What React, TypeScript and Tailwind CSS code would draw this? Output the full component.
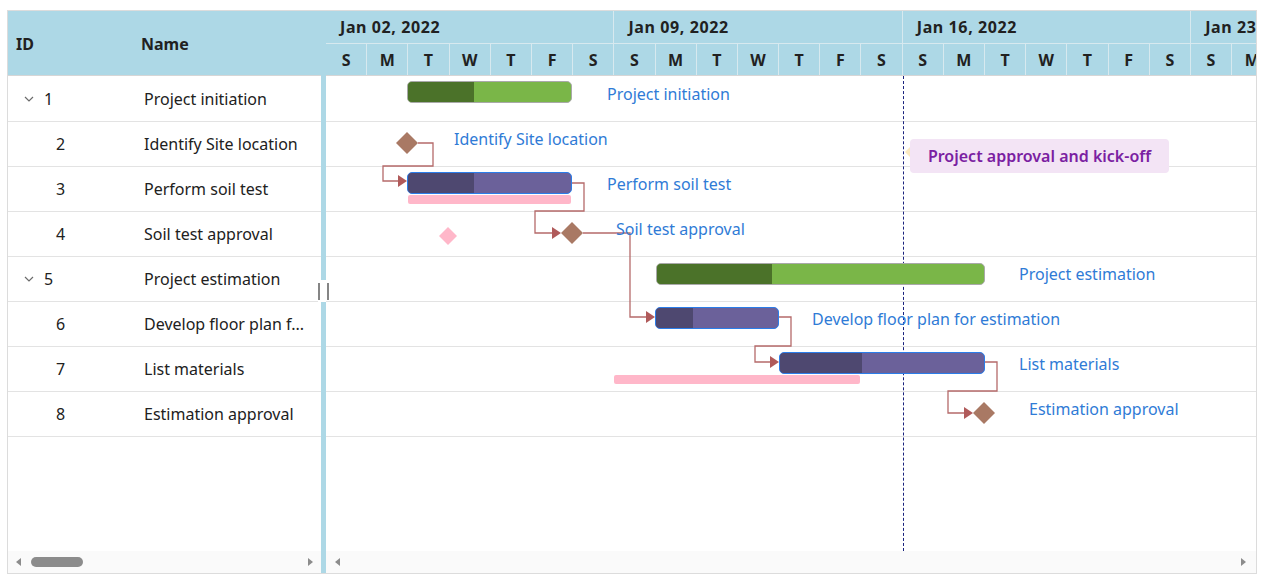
import React from "react";

const days = ["S", "M", "T", "W", "T", "F", "S"];
const weeks = ["Jan 02, 2022", "Jan 09, 2022", "Jan 16, 2022", "Jan 23, 2022"];

const rows = [
  { id: 1, name: "Project initiation", parent: true },
  { id: 2, name: "Identify Site location" },
  { id: 3, name: "Perform soil test" },
  { id: 4, name: "Soil test approval" },
  { id: 5, name: "Project estimation", parent: true },
  { id: 6, name: "Develop floor plan f...", },
  { id: 7, name: "List materials" },
  { id: 8, name: "Estimation approval" },
];

type Bar = { x: number; y: number; w: number; dark: number; kind: "green" | "purple" };
const bars: Bar[] = [
  { x: 81, y: 5, w: 165, dark: 66, kind: "green" },
  { x: 81, y: 96, w: 165, dark: 66, kind: "purple" },
  { x: 330, y: 187, w: 329, dark: 115, kind: "green" },
  { x: 329, y: 231, w: 124, dark: 37, kind: "purple" },
  { x: 453, y: 276, w: 206, dark: 82, kind: "purple" },
];

const baselines = [
  { x: 82, y: 119, w: 163 },
  { x: 288, y: 299, w: 246 },
];

const labels = [
  { x: 281, cy: 18, t: "Project initiation" },
  { x: 128, cy: 63, t: "Identify Site location" },
  { x: 281, cy: 108, t: "Perform soil test" },
  { x: 290, cy: 153, t: "Soil test approval" },
  { x: 693, cy: 198, t: "Project estimation" },
  { x: 486, cy: 243, t: "Develop floor plan for estimation" },
  { x: 693, cy: 288, t: "List materials" },
  { x: 703, cy: 333, t: "Estimation approval" },
];

const diamond = (cx: number, cy: number, r: number) =>
  `${cx},${cy - r} ${cx + r},${cy} ${cx},${cy + r} ${cx - r},${cy}`;

const arrow = (tipX: number, y: number) =>
  `${tipX - 9},${y - 6} ${tipX},${y} ${tipX - 9},${y + 6}`;

function Chevron() {
  return (
    <svg width="10" height="6" viewBox="0 0 10 6" className="block">
      <path d="M1 1 L5 5 L9 1" fill="none" stroke="#6b6b6b" strokeWidth="1.2" />
    </svg>
  );
}

function ArrowL() {
  return (
    <svg width="5" height="8" viewBox="0 0 5 8" className="block">
      <path d="M5 0 L0 4 L5 8 Z" fill="#8c8c8c" />
    </svg>
  );
}
function ArrowR() {
  return (
    <svg width="5" height="8" viewBox="0 0 5 8" className="block">
      <path d="M0 0 L5 4 L0 8 Z" fill="#8c8c8c" />
    </svg>
  );
}

export default function App() {
  return (
    <div className="w-[1266px] h-[578px] bg-white pt-[10px] pl-[7px] font-['Noto_Sans',sans-serif] text-[#212121]">
      <div className="w-[1250px] h-[564px] border border-[#dcdcdc] flex">
        {/* Left grid */}
        <div className="w-[313px] flex flex-col shrink-0">
          <div className="h-[65px] bg-[#add8e6] border-b border-[#d6d6d6] flex items-center font-bold text-[16px] pt-[2px]">
            <div className="w-[126px] pl-[8px]">ID</div>
            <div className="pl-[7px]">Name</div>
          </div>
          <div className="h-[475px] pt-[1px]">
            {rows.map((r) => (
              <div key={r.id} className="h-[45px] border-b border-[#e3e3e3] flex items-center text-[16px]">
                <div className="w-[126px] flex items-center pl-[8px]">
                  {r.parent ? (
                    <>
                      <span className="ml-[8px]"><Chevron /></span>
                      <span className="ml-[10px]">{r.id}</span>
                    </>
                  ) : (
                    <span className="ml-[40px]">{r.id}</span>
                  )}
                </div>
                <div className="pl-[10px] whitespace-nowrap">{r.name}</div>
              </div>
            ))}
          </div>
          <div className="h-[22px] bg-[#fafafa] flex items-center px-[8px]">
            <ArrowL />
            <div className="ml-[10px] w-[52px] h-[10px] rounded-full bg-[#8c8c8c]" />
            <div className="flex-1" />
            <ArrowR />
          </div>
        </div>

        {/* Splitter */}
        <div className="w-[5px] bg-[#add8e6] relative shrink-0">
          <div className="absolute left-[-3px] top-[269px] w-[11px] h-[22px] bg-white flex justify-between items-center">
            <div className="w-[2px] h-[17px] bg-[#858585]" />
            <div className="w-[2px] h-[17px] bg-[#858585]" />
          </div>
        </div>

        {/* Chart */}
        <div className="flex-1 flex flex-col overflow-hidden">
          <div className="h-[65px] bg-[#add8e6] border-b border-[#d6d6d6] flex flex-col">
            <div className="h-[33px] flex border-b border-[#d7e9ef]">
              {weeks.map((w) => (
                <div key={w} className="w-[288.4px] shrink-0 border-r border-[#d7e9ef] pl-[14px] flex items-center font-bold text-[16px] tracking-[0.6px] whitespace-nowrap">
                  {w}
                </div>
              ))}
            </div>
            <div className="flex-1 flex">
              {weeks.map((w) =>
                days.map((d, i) => (
                  <div key={w + i} className="w-[41.2px] shrink-0 border-r border-[#d7e9ef] flex items-center justify-center font-bold text-[16px]">
                    {d}
                  </div>
                ))
              )}
            </div>
          </div>

          <div className="h-[475px] pt-[1px] relative">
            {rows.map((r) => (
              <div key={r.id} className="h-[45px] border-b border-[#e3e3e3]" />
            ))}

            {/* dashed line */}
            <div className="absolute left-[577px] top-0 h-[475px] border-l border-dashed border-[#1a237e]" />

            {baselines.map((b, i) => (
              <div key={i} className="absolute h-[9px] rounded-[2px] bg-[#ffb7c9]" style={{ left: b.x, top: b.y, width: b.w }} />
            ))}

            {bars.map((b, i) => (
              <div
                key={i}
                className={
                  b.kind === "green"
                    ? "absolute h-[22px] rounded-[5px] border border-[#a9a9a9] bg-[#7ab648] overflow-hidden"
                    : "absolute h-[22px] rounded-[5px] border border-[#2b7de9] bg-[#6b619a] overflow-hidden"
                }
                style={{ left: b.x, top: b.y, width: b.w }}
              >
                <div
                  className={b.kind === "green" ? "h-full bg-[#4b7229]" : "h-full bg-[#4e4870]"}
                  style={{ width: b.dark }}
                />
              </div>
            ))}

            <svg className="absolute left-0 top-0" width="931" height="475">
              <g fill="none" stroke="#b56a6a" strokeWidth="1.3">
                <path d="M92 67 H107 V90 H57 V105 H73" />
                <path d="M246 107 H258 V135 H209 V157 H226" />
                <path d="M257 157 H304 V241 H320" />
                <path d="M453 241 H465 V270 H429 V286 H444" />
                <path d="M659 286 H671 V315 H622 V337 H638" />
              </g>
              <g fill="#b05a5a">
                <polygon points={arrow(81, 105)} />
                <polygon points={arrow(235, 157)} />
                <polygon points={arrow(329, 241)} />
                <polygon points={arrow(453, 286)} />
                <polygon points={arrow(647, 337)} />
              </g>
              <polygon points={diamond(81, 67, 11)} fill="#a97964" />
              <polygon points={diamond(122, 160, 9)} fill="#ffb7c9" />
              <polygon points={diamond(246, 157, 11)} fill="#a97964" />
              <polygon points={diamond(658, 337, 11)} fill="#a97964" />
              <polygon points="584,71 579,76 584,81" fill="#fbe9c0" />
            </svg>

            {labels.map((l, i) => (
              <div
                key={i}
                className="absolute text-[16px] leading-[22px] text-[#2f7bd6] whitespace-nowrap"
                style={{ left: l.x, top: l.cy - 11 }}
              >
                {l.t}
              </div>
            ))}

            <div className="absolute left-[584px] top-[63px] w-[259px] h-[34px] rounded-[4px] bg-[#f3e4f5] flex items-center justify-center font-semibold text-[16px] text-[#7b1fa2] whitespace-nowrap">
              Project approval and kick-off
            </div>
          </div>

          <div className="h-[22px] bg-[#fafafa] flex items-center pl-[9px] pr-[10px]">
            <ArrowL />
            <div className="flex-1" />
            <ArrowR />
          </div>
        </div>
      </div>
    </div>
  );
}
